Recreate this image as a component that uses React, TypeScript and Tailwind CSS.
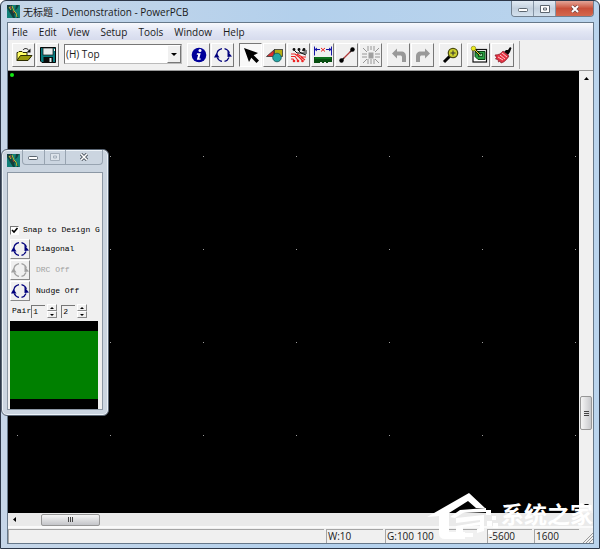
import React from 'react';

const menus = ['File', 'Edit', 'View', 'Setup', 'Tools', 'Window', 'Help'];

const LogoIcon = ({ className }: { className?: string }) => (
  <svg viewBox="0 0 13 13" className={className} aria-hidden="true">
    <rect width="13" height="13" fill="#128078" />
    <path d="M0 0h3l2 5 2 3 1 5H6L3 8 0 3zM9 0h3l-2 4-2 1z" fill="#12403c" />
    <path d="M4 0l2 4 1 3 2 2 2 4" fill="none" stroke="#12403c" strokeWidth="1.500" />
    <path d="M2 2l2 3M5 1l2 5 2 2 1 4" fill="none" stroke="#b9c534" strokeWidth="1" />
    <path d="M3 1l1 3M6 6l1 2" fill="none" stroke="#d33b2c" strokeWidth="0.8" />
  </svg>
);

const OpenIcon = () => (
  <svg viewBox="0 0 20 20" className="size-5 shrink-0" aria-hidden="true">
    <path d="M3 15.500V7.500h1l1-1h3l1 1h4v3" fill="#ffff66" stroke="#2b2b00" />
    <path d="M3 15.500l3.500-5H18l-4 5z" fill="#9a9a0c" stroke="#2b2b00" />
    <path d="M9 5c1.500-2 4-2 6 .5" fill="none" stroke="#111" />
    <path d="M16.500 3.500v4h-4z" fill="#111" />
  </svg>
);

const SaveIcon = () => (
  <svg viewBox="0 0 20 20" className="size-5 shrink-0" aria-hidden="true">
    <path d="M2 2.500h16v15H4l-2-2z" fill="#087c80" />
    <path d="M2.500 2.500h15v15H4l-1.500-1.500z" fill="none" stroke="#050505" />
    <rect x="5" y="3" width="10" height="7" fill="#e7eded" stroke="#111" strokeWidth="0.7" />
    <rect x="5.500" y="12" width="9.500" height="6" fill="#0b0b0b" />
    <rect x="11.500" y="13" width="2" height="4" fill="#dcefef" />
    <rect x="16" y="4" width="1" height="2" fill="#f2f2f2" />
  </svg>
);

const InfoIcon = () => (
  <svg viewBox="0 0 20 20" className="size-5 shrink-0" aria-hidden="true">
    <circle cx="10" cy="10" r="7.300" fill="#00009a" />
    <circle cx="11" cy="5.500" r="1.500" fill="#fff" />
    <path d="M8 8.200h3.700l-1.400 5.300h1.500l-.3 1.200H7.800l1.400-5H7.700z" fill="#fff" />
  </svg>
);

const CycleIcon = ({ disabled = false }: { disabled?: boolean }) => {
  const color = disabled ? '#a0a0a0' : '#00007c';
  return (
    <svg viewBox="0 0 20 20" className="size-5 shrink-0" aria-hidden="true">
      <path d="M3.800 10A6.500 6.500 0 0 1 9 3.600M11.500 3.600A6.500 6.500 0 0 1 16.300 8M16 12.500A6.500 6.500 0 0 1 11.500 16.400M9 16.400A6.500 6.500 0 0 1 4.200 12.500" fill="none" stroke={color} strokeWidth="1.300" />
      <path d="M1 12.500L3.500 8l3 4.500z" fill={color} />
      <path d="M14.500 6l4.500 5.500-4.500.5z" fill={color} />
    </svg>
  );
};

const PointerIcon = () => (
  <svg viewBox="0 0 20 20" className="size-5 shrink-0" aria-hidden="true">
    <path d="M3 3l14 5-4.300 2.300 5.300 5.200-2.500 2.500-5.200-5.300L8 17z" fill="#000" />
  </svg>
);

const ShapesIcon = () => (
  <svg viewBox="0 0 20 20" className="size-5 shrink-0" aria-hidden="true">
    <path d="M1.500 11.500L9 5v6.500z" fill="#e22b2b" stroke="#333" strokeWidth="0.800" />
    <rect x="9.500" y="4.500" width="8" height="7" fill="#b6ad13" stroke="#333" strokeWidth="0.800" />
    <circle cx="12" cy="12.500" r="4.300" fill="#25a6a6" stroke="#155" strokeWidth="0.800" />
  </svg>
);

const RouteIcon = () => (
  <svg viewBox="0 0 20 20" className="size-5 shrink-0" aria-hidden="true">
    <path d="M5 5l3 3h4l5 2M9 5l3 3h6M13 5l2 1h3" fill="none" stroke="#111" />
    <path d="M2 9h4l4 3 3 3M2 11.500h4l3 4M2 14h2l1 2M8 9l5 3h4M12 12l4 3" fill="none" stroke="#ee2424" strokeWidth="1.200" />
    <g fill="#111"><circle cx="5" cy="4.500" r="1.400" /><circle cx="10" cy="4.500" r="1.400" /><circle cx="15" cy="4.500" r="1.400" /></g>
    <g fill="#ee2424"><circle cx="5" cy="16" r="1.300" /><circle cx="9" cy="16" r="1.300" /><circle cx="13.500" cy="16" r="1.300" /></g>
  </svg>
);

const DimensionIcon = () => (
  <svg viewBox="0 0 20 20" className="size-5 shrink-0" aria-hidden="true">
    <path d="M1.500 1.500v9M18.500 1.500v9M2 4.500h5M13 4.500h5M4 3L2 4.500 4 6M16 3l2 1.500L16 6" fill="none" stroke="#1515a8" />
    <path d="M8 3l4 3.500M12 3L8 6.500" stroke="#e22" fill="none" />
    <path d="M1 12h18v5h-4v1h-2v-1h-2v1H9v-1H7v1H1z" fill="#064d10" />
    <path d="M2 13h16" stroke="#169228" />
  </svg>
);

const TraceIcon = () => (
  <svg viewBox="0 0 20 20" className="size-5 shrink-0" aria-hidden="true">
    <path d="M5 15L15 5" stroke="#b03a3a" strokeWidth="1.300" />
    <path d="M5 15l2-2M13 7l2-2" stroke="#222" strokeWidth="1.300" />
    <circle cx="4.500" cy="15.500" r="2.200" fill="#000" />
    <circle cx="15.500" cy="4.500" r="2.200" fill="#000" />
  </svg>
);

const BurstIcon = () => (
  <svg viewBox="0 0 20 20" className="size-5 shrink-0" aria-hidden="true">
    <path d="M7 1v5M10 1v4M13 1v5M7 14v5M10 14v5M13 14v5M1 9h5M1 12h5M14 9h5M14 12h5M2 3l4 4M18 3l-4 4M2 18l4-4M18 18l-4-4" stroke="#8c8c8c" strokeWidth="0.900" />
    <rect x="7.500" y="7.500" width="5" height="6" fill="#a0a0a0" />
  </svg>
);

const UndoIcon = ({ flip = false }: { flip?: boolean }) => (
  <svg viewBox="0 0 20 20" className={`size-5 shrink-0 ${flip ? '-scale-x-100' : ''}`} aria-hidden="true">
    <path d="M3 8.500L8 3.500v3h4c3.500 0 5 2 5 5V17h-4v-4.500c0-1.500-.5-2-2-2H8v3z" fill="#999" />
  </svg>
);

const ZoomIcon = () => (
  <svg viewBox="0 0 20 20" className="size-5 shrink-0" aria-hidden="true">
    <path d="M3 17l6-6" stroke="#000" strokeWidth="3" />
    <circle cx="12" cy="8" r="4.700" fill="#cdd12e" stroke="#4b4b10" strokeWidth="1.300" />
    <path d="M12 5.500v5M9.500 8h5" stroke="#333" />
  </svg>
);

const BoardIcon = () => (
  <svg viewBox="0 0 20 20" className="size-5 shrink-0" aria-hidden="true">
    <rect x="4" y="4.500" width="13.500" height="12.500" fill="#fff" stroke="#101010" strokeWidth="1.200" />
    <path d="M6 6.500h10v8H9l-3-3z" fill="#2aa044" stroke="#064310" />
    <rect x="9.500" y="8.500" width="4" height="3" fill="#8fd49c" stroke="#064310" strokeWidth="0.800" />
    <path d="M5 4l6 6" stroke="#111" strokeWidth="2.400" />
    <path d="M5 4l6 6" stroke="#e7e727" />
    <circle cx="4.500" cy="3.500" r="2.300" fill="#e9e81e" stroke="#77770a" strokeWidth="0.600" />
  </svg>
);

const BrushIcon = () => (
  <svg viewBox="0 0 20 20" className="size-5 shrink-0" aria-hidden="true">
    <path d="M11 7l2-2h2l2-3 1.500 1-1.500 4-2 3z" fill="#050505" />
    <path d="M2 10c3 0 6-1 8-4l6 5c-2 3-4 6-8 7l-1-2-1.500 1-.5-2.500L2.500 14l1-1.500z" fill="#e53343" stroke="#801525" strokeWidth="0.700" />
    <path d="M7 10l5 4M9 8l5 4M5 12l5 3" stroke="#ffc8cc" strokeWidth="1" />
  </svg>
);

const toolGroups = [
  [
    { name: 'Info', icon: <InfoIcon /> },
    { name: 'Cycle', icon: <CycleIcon /> },
  ],
  [
    { name: 'Select', icon: <PointerIcon />, active: true },
    { name: 'Drafting', icon: <ShapesIcon /> },
    { name: 'Route', icon: <RouteIcon /> },
    { name: 'Dimension', icon: <DimensionIcon /> },
    { name: 'Add trace', icon: <TraceIcon /> },
    { name: 'Explode', icon: <BurstIcon />, disabled: true },
  ],
  [
    { name: 'Undo', icon: <UndoIcon />, disabled: true },
    { name: 'Redo', icon: <UndoIcon flip />, disabled: true },
  ],
  [{ name: 'Zoom', icon: <ZoomIcon /> }],
  [
    { name: 'Board', icon: <BoardIcon /> },
    { name: 'Redraw', icon: <BrushIcon /> },
  ],
];

interface ToolButtonProps {
  name: string;
  icon: React.ReactNode;
  active?: boolean;
  disabled?: boolean;
}

const ToolButton: React.FC<ToolButtonProps> = ({ name, icon, active, disabled }) => (
  <button
    aria-label={name}
    disabled={disabled}
    className={`flex w-[23px] h-6 items-center justify-center border ${
      active
        ? 'bg-[#f8f8f8] border-t-[#777] border-l-[#777] border-r-white border-b-white'
        : 'bg-[#f0f0f0] border-t-white border-l-white border-r-[#777] border-b-[#777]'
    }`}
  >
    {icon}
  </button>
);

const Caption = () => (
  <div className="flex h-4 shrink-0 self-start overflow-hidden rounded-b border border-t-0 border-[#717f8f]">
    <button aria-label="Minimize" className="flex w-[22px] items-center justify-center border-r border-[#8594a5] bg-linear-to-b from-[#e2ebf4] via-[#c3d0de] to-[#d4e1ee]">
      <svg viewBox="0 0 10 8" className="h-2 w-2.5"><rect x=".5" y="3.500" width="9" height="3" rx="1" fill="#fff" stroke="#5c6670" /></svg>
    </button>
    <button aria-label="Maximize" className="flex w-[22px] items-center justify-center border-r border-[#8594a5] bg-linear-to-b from-[#e2ebf4] via-[#c3d0de] to-[#d4e1ee]">
      <svg viewBox="0 0 10 8" className="h-2 w-2.5"><path d="M.5.500h9v7h-9zM3.500 3h3v2h-3z" fill="#fff" stroke="#5c6670" /></svg>
    </button>
    <button aria-label="Close" className="flex w-[37px] items-center justify-center bg-linear-to-b from-[#e3a598] via-[#c9503a] to-[#d4684e]">
      <svg viewBox="0 0 10 8" className="h-2 w-2.5">
        <path d="M2 1l6 6M8 1L2 7" stroke="#6b4040" strokeWidth="3.200" />
        <path d="M2 1l6 6M8 1L2 7" stroke="#fff" strokeWidth="2" />
      </svg>
    </button>
  </div>
);

const DesignCanvas = () => (
  <div className="min-h-0 min-w-0 flex-1 bg-black">
    <svg className="block size-full" aria-label="Design area">
      <defs>
        <pattern id="grid" x="9" y="85" width="93" height="93" patternUnits="userSpaceOnUse">
          <rect width="1" height="1" fill="#9c9c9c" />
        </pattern>
      </defs>
      <rect y="80" width="100%" height="100%" fill="url(#grid)" />
      <circle cx="4" cy="4" r="2" fill="#12e812" />
    </svg>
  </div>
);

const Spinner = ({ label, value }: { label: string; value: string }) => (
  <div className="flex items-center gap-0.5">
    <input
      aria-label={label}
      defaultValue={value}
      className="h-[13px] w-3.5 border-t border-l border-[#777] bg-[#f0f0f0] pl-px outline-none"
    />
    <div className="flex flex-col">
      <button aria-label={`${label} up`} className="flex h-[7px] w-2.5 items-center justify-center border border-t-white border-l-white border-r-[#888] border-b-[#888]">
        <svg viewBox="0 0 4 2" className="h-0.5 w-1"><path d="M0 2l2-2 2 2z" /></svg>
      </button>
      <button aria-label={`${label} down`} className="flex h-[7px] w-2.5 items-center justify-center border border-t-white border-l-white border-r-[#888] border-b-[#888]">
        <svg viewBox="0 0 4 2" className="h-0.5 w-1"><path d="M0 0l2 2 2-2z" /></svg>
      </button>
    </div>
  </div>
);

const modes = [
  { label: 'Diagonal', disabled: false },
  { label: 'DRC Off', disabled: true },
  { label: 'Nudge Off', disabled: false },
];

const Palette = () => (
  <section
    aria-label="Routing options"
    className="absolute left-0 top-[148px] w-[108px] rounded-md border border-[#596573] bg-[#cbd5e0] px-[5px] pb-[5px] font-['Liberation_Mono',monospace] text-[8px] leading-3 text-black shadow-[inset_0_0_0_1px_#edf3f8]"
  >
    <div className="flex h-[22px] items-start">
      <LogoIcon className="mt-1 size-[13px]" />
      <div className="ml-0.5 flex h-[15px] flex-1 rounded-b border border-t-0 border-[#98a4b1]">
        <button aria-label="Minimize palette" className="flex flex-1 items-center justify-center border-r border-[#98a4b1]">
          <svg viewBox="0 0 10 8" className="h-2 w-2.5"><rect x=".5" y="3.500" width="9" height="3" rx="1" fill="#fff" stroke="#59636e" /></svg>
        </button>
        <button aria-label="Maximize palette" disabled className="flex flex-1 items-center justify-center border-r border-[#98a4b1]">
          <svg viewBox="0 0 10 8" className="h-2 w-2.5"><path d="M.5.500h9v7h-9zM3.500 3h3v2h-3z" fill="#dde4eb" stroke="#a3aeba" /></svg>
        </button>
        <button aria-label="Close palette" className="flex w-9 items-center justify-center">
          <svg viewBox="0 0 10 8" className="h-2 w-2.5">
            <path d="M2 1l6 6M8 1L2 7" stroke="#4d5660" strokeWidth="3.200" />
            <path d="M2 1l6 6M8 1L2 7" stroke="#fff" strokeWidth="1.500" />
          </svg>
        </button>
      </div>
    </div>
    <div className="overflow-hidden border border-[#8c98a5] bg-[#f0f0f0] pt-[49px] pl-0.5">
      <label className="flex h-4 items-center gap-1 whitespace-nowrap">
        <span className="relative size-[9px] shrink-0">
          <input type="checkbox" defaultChecked className="peer block size-[9px] appearance-none border border-[#777] border-r-white border-b-white bg-white" />
          <svg viewBox="0 0 9 9" className="pointer-events-none absolute inset-0 hidden size-[9px] peer-checked:block"><path d="M2 4l2 2 3.500-4" fill="none" stroke="#000" strokeWidth="1.600" /></svg>
        </span>
        Snap to Design G
      </label>
      {modes.map(m => (
        <div key={m.label} className={`flex h-[21px] items-center gap-1.5 ${m.disabled ? 'text-[#a0a0a0]' : ''}`}>
          <button aria-label={m.label} disabled={m.disabled} className="flex size-5 shrink-0 items-center justify-center border border-t-white border-l-white border-r-[#888] border-b-[#888]">
            <CycleIcon disabled={m.disabled} />
          </button>
          <span>{m.label}</span>
        </div>
      ))}
      <div className="flex h-5 items-center pl-0.5">
        <span>Pair</span>
        <div className="flex gap-1">
          <Spinner label="First pair" value="1" />
          <Spinner label="Second pair" value="2" />
        </div>
      </div>
      <div className="mr-1 h-[88px] border-y-[10px] border-black bg-[#008000]" />
    </div>
  </section>
);

const Watermark = () => (
  <div className="pointer-events-none absolute right-1.5 bottom-1 flex items-start text-white">
    <svg viewBox="0 0 74 52" className="h-[52px] w-[74px]" aria-hidden="true">
      <g fill="#fff">
        <path d="M0 25L42 1l16 15h-9l-8-7-19 12v19h16v7H18q-6 0-6-6V24z" />
        <path d="M23 25l10-7 26-2v4l-23 1-8 5z" />
        <path d="M29 26l28-3v16l-7 2v-4l3-1v-3l-17 2v6h10v4H29v-11l24-4v-2l-24 3z" />
        <path d="M59 18h5v5h-5zM65 24h4v4h-4zM60 29h5v5h-5zM66 31h5v5h-5zM61 38h4v4h-4z" />
      </g>
    </svg>
    <div className="mt-[9px] font-['Noto_Sans_CJK_SC',sans-serif] text-[23px] leading-6 font-bold">系统之家</div>
  </div>
);

const StatusPane = ({ className, children }: { className: string; children?: React.ReactNode }) => (
  <div className={`h-3.5 border-t border-l border-[#a5a5a5] pl-px ${className}`}>{children}</div>
);

export default function App() {
  return (
    <div className="relative flex h-screen flex-col overflow-hidden rounded-t-md border border-[#2d3748] bg-linear-to-r from-[#c6d6e8] via-[#b3d0ec] to-[#bad4ed] pr-[5px] pb-1 pl-1.5 font-['Open_Sans','Noto_Sans_CJK_SC',sans-serif] text-[10px] text-[#1a1a1a]">
      <header className="flex h-[21px] shrink-0 items-center">
        <LogoIcon className="size-[13px] shrink-0" />
        <h1 className="ml-[3px] flex-1 truncate leading-4">无标题 - Demonstration - PowerPCB</h1>
        <Caption />
      </header>

      <div className="flex min-h-0 flex-1 flex-col border border-[#66788a] bg-[#f0f0f0]">
        <nav className="flex h-[17px] shrink-0 items-center gap-[11px] bg-linear-to-b from-[#f8f9fd] via-[#e2e6f4] to-[#d6dbed] pl-1">
          {menus.map(menu => (
            <button key={menu} className="leading-4">{menu}</button>
          ))}
        </nav>

        <div className="flex h-[31px] shrink-0 items-center gap-[5px] border-b border-[#999] pl-1">
          <div className="flex gap-px">
            <ToolButton name="Open" icon={<OpenIcon />} />
            <ToolButton name="Save" icon={<SaveIcon />} />
          </div>
          <div className="relative w-[118px] self-start pt-1">
            <select aria-label="Layer" className="block h-5 w-full appearance-none border border-[#777] border-r-[#bbb] border-b-[#bbb] bg-white pl-px leading-4">
              <option>(H) Top</option>
            </select>
            <span className="pointer-events-none absolute top-[5px] right-px flex h-[18px] w-3.5 items-center justify-center border border-t-white border-l-white border-r-[#777] border-b-[#777] bg-[#f0f0f0]">
              <svg viewBox="0 0 6 3" className="h-[3px] w-1.5"><path d="M0 0h6L3 3z" /></svg>
            </span>
          </div>
          {toolGroups.map((group, i) => (
            <div key={i} className="flex gap-px">
              {group.map(tool => (
                <ToolButton key={tool.name} {...tool} />
              ))}
            </div>
          ))}
          <div className="h-7 border-l border-[#aaa]" />
        </div>

        <div className="flex min-h-0 flex-1">
          <DesignCanvas />
          <div className="flex w-3.5 shrink-0 flex-col items-center bg-[#f0f0f0] py-1.5">
            <svg viewBox="0 0 5 3" className="h-[3px] w-[5px]"><path d="M0 3l2.500-3L5 3z" /></svg>
            <div className="flex-1" />
            <div className="flex h-[34px] w-3 flex-col items-center justify-center gap-px rounded-xs border border-[#979797] bg-linear-to-r from-[#f5f5f5] to-[#c8c9cc]">
              <span className="h-px w-[5px] bg-[#444]" />
              <span className="h-px w-[5px] bg-[#444]" />
              <span className="h-px w-[5px] bg-[#444]" />
            </div>
            <div className="h-[74px]" />
            <svg viewBox="0 0 5 3" className="h-[3px] w-[5px]"><path d="M0 0l2.500 3L5 0z" /></svg>
          </div>
        </div>

        <div className="flex h-[13px] shrink-0 items-center bg-[#eaeaea] px-[5px]">
          <svg viewBox="0 0 3 5" className="h-[5px] w-[3px]"><path d="M3 0L0 2.500 3 5z" /></svg>
          <div className="ml-[25px] flex h-3 w-[59px] items-center justify-center gap-px rounded-xs border border-[#979797] bg-linear-to-b from-[#f5f5f5] to-[#c4c5c9]">
            <span className="h-[5px] w-px bg-[#444]" />
            <span className="h-[5px] w-px bg-[#444]" />
            <span className="h-[5px] w-px bg-[#444]" />
          </div>
        </div>

        <footer className="flex h-[17px] shrink-0 items-end gap-0.5 border-t-2 border-[#fafafa] leading-[13px]">
          <StatusPane className="flex-1" />
          <StatusPane className="w-[57px]">W:10</StatusPane>
          <StatusPane className="w-[92px]">G:100 100</StatusPane>
          <div className="w-1.5" />
          <StatusPane className="w-[45px]">-5600</StatusPane>
          <StatusPane className="w-[45px]">1600</StatusPane>
          <svg viewBox="0 0 12 12" className="size-3"><path d="M2 12L12 2M5 12l7-7M8 12l4-4" stroke="#999" /></svg>
        </footer>
      </div>

      <Palette />
      <Watermark />
    </div>
  );
}
